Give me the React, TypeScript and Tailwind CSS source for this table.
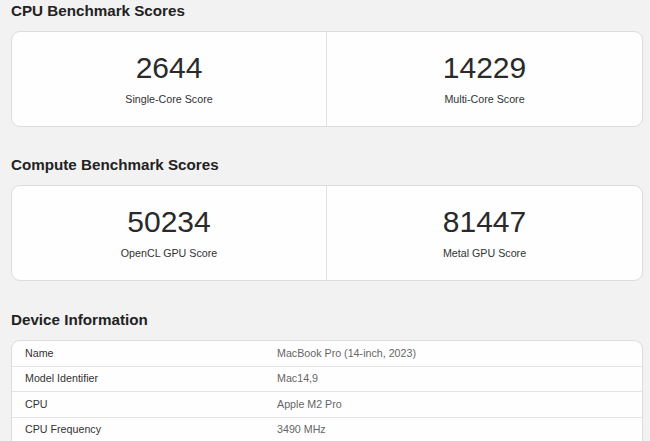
export default function App() {
  const cpu = [
    { score: "2644", label: "Single-Core Score" },
    { score: "14229", label: "Multi-Core Score" },
  ];
  const compute = [
    { score: "50234", label: "OpenCL GPU Score" },
    { score: "81447", label: "Metal GPU Score" },
  ];
  const device = [
    ["Name", "MacBook Pro (14-inch, 2023)"],
    ["Model Identifier", "Mac14,9"],
    ["CPU", "Apple M2 Pro"],
    ["CPU Frequency", "3490 MHz"],
  ];

  const ScoreCard = ({ items }: { items: { score: string; label: string }[] }) => (
    <div className="grid grid-cols-2 rounded-[9px] border border-[#dcdcdc] bg-[#fefefe]">
      {items.map((it, i) => (
        <div
          key={i}
          className={
            "flex flex-col items-center pt-[18px] pb-[19px] " +
            (i === 0 ? "border-r border-[#e0e0e0]" : "")
          }
        >
          <div className="text-[30px] leading-[36px] text-[#2a2a2a]">{it.score}</div>
          <div className="mt-[5px] text-[10.7px] leading-[16px] text-[#333]">{it.label}</div>
        </div>
      ))}
    </div>
  );

  return (
    <div
      className="h-[441px] overflow-hidden bg-[#f2f2f2] pl-[11px] pr-[7px]"
      style={{ fontFamily: '"Liberation Sans", Arial, sans-serif' }}
    >
      <h2 className="pt-[2px] text-[15.2px] font-bold leading-[18px] text-[#222]">CPU Benchmark Scores</h2>
      <div className="mt-[11px]">
        <ScoreCard items={cpu} />
      </div>

      <h2 className="mt-[29px] text-[15.2px] font-bold leading-[18px] text-[#222]">Compute Benchmark Scores</h2>
      <div className="mt-[11px]">
        <ScoreCard items={compute} />
      </div>

      <h2 className="mt-[30px] text-[15.2px] font-bold leading-[18px] text-[#222]">Device Information</h2>
      <div className="mt-[11px] rounded-t-[9px] border border-b-0 border-[#dcdcdc] bg-[#fefefe]">
        {device.map(([k, v], i) => (
          <div
            key={i}
            className="flex h-[25.5px] items-center border-b border-[#e4e4e4] pb-[1px] text-[10.7px]"
          >
            <div className="w-[265px] pl-[13px] text-[#333]">{k}</div>
            <div className="text-[#666]">{v}</div>
          </div>
        ))}
      </div>
    </div>
  );
}
